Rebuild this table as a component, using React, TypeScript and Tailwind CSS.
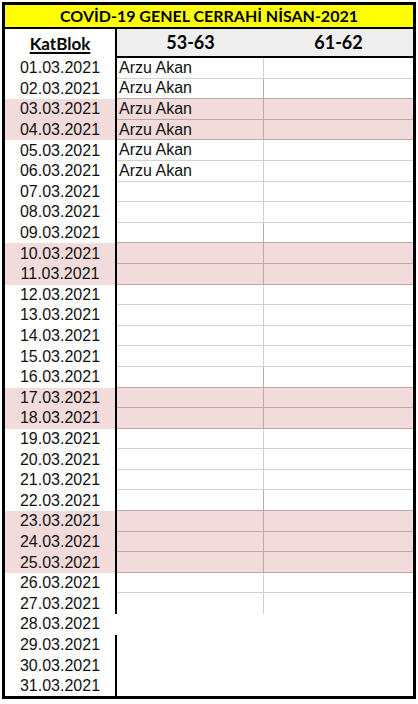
import React from "react";

const pinkDays = new Set([3, 4, 10, 11, 17, 18, 23, 24, 25]);

export default function App() {
  const days = Array.from({ length: 31 }, (_, i) => i + 1);
  return (
    <div className="w-[418px] h-[704px] bg-white pt-[2px] pl-[2px]">
      <div className="w-[414px] border-[3px] border-black bg-white">
        <div className="h-[24px] bg-[#ffff00] border-b-2 border-black flex items-center justify-center font-['Lato',sans-serif] font-bold text-[16px] text-black leading-none">
          COVİD-19 GENEL CERRAHİ NİSAN-2021
        </div>
        <div className="flex h-[29px] font-['Lato',sans-serif] font-bold text-[17px] text-black">
          <div className="w-[110px] flex items-center justify-center">
            <span className="underline underline-offset-2 decoration-2">KatBlok</span>
          </div>
          <div className="w-[2px] bg-black" />
          <div className="flex-1 flex bg-[#efefef] border-b-2 border-black text-[18px]">
            <div className="w-[147px] flex items-center justify-center">53-63</div>
            <div className="flex-1 flex items-center justify-center">61-62</div>
          </div>
        </div>
        {days.map((d) => {
          const dd = String(d).padStart(2, "0");
          const pink = pinkDays.has(d);
          const dark = pink || pinkDays.has(d + 1);
          const grid = d <= 27;
          const last = d === 27;
          return (
            <div
              key={d}
              className={
                pink
                  ? "flex h-[20.6px] bg-[#f2dcdb] font-['Liberation_Sans',Arial,sans-serif] text-[16px] text-[#111] leading-none"
                  : "flex h-[20.6px] bg-white font-['Liberation_Sans',Arial,sans-serif] text-[16px] text-[#111] leading-none"
              }
            >
              <div className="w-[110px] flex items-center justify-center">{dd}.03.2021</div>
              <div className={d === 28 ? "w-[2px]" : "w-[2px] bg-black"} />
              <div
                className={
                  !grid
                    ? "w-[147px] flex items-center pl-[2px]"
                    : last
                    ? "w-[147px] flex items-center pl-[2px] border-r border-[#cfcfcf]"
                    : dark
                    ? "w-[147px] flex items-center pl-[2px] border-r border-b border-[#bfa8a8]"
                    : "w-[147px] flex items-center pl-[2px] border-r border-b border-[#d2d2d2]"
                }
              >
                {d <= 6 ? "Arzu Akan" : ""}
              </div>
              <div
                className={
                  !grid || last
                    ? "flex-1"
                    : dark
                    ? "flex-1 border-b border-[#bfa8a8]"
                    : "flex-1 border-b border-[#d2d2d2]"
                }
              />
            </div>
          );
        })}
      </div>
    </div>
  );
}
